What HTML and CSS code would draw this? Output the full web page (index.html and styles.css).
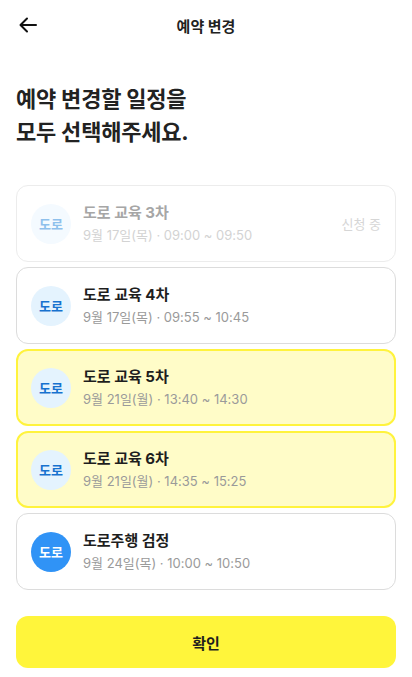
FILE: index.html
```html
<!DOCTYPE html>
<html lang="ko">
<head>
    <meta charset="UTF-8">
    <title>예약 변경</title>
    <meta name="viewport" content="width=device-width, initial-scale=1">
    <link rel="stylesheet" href="styles.css">
</head>
<body>

    <header class="top-bar">
        <button class="back-btn" aria-label="뒤로">
            <svg width="18" height="16" viewBox="0 0 18 16" fill="none" stroke="#111" stroke-width="2" stroke-linecap="round" stroke-linejoin="round">
                <path d="M17 8H2"/>
                <path d="M8 1.5L1.5 8L8 14.5"/>
            </svg>
        </button>
        <h2 class="top-title">예약 변경</h2>
    </header>

    <h1 class="heading">예약 변경할 일정을<br>모두 선택해주세요.</h1>

    <div class="schedule-list">
        <div class="schedule disabled">
            <span class="badge">도로</span>
            <div class="info">
                <p class="name">도로 교육 3차</p>
                <p class="time">9월 17일(목) · 09:00 ~ 09:50</p>
            </div>
            <span class="status">신청 중</span>
        </div>
        <div class="schedule">
            <span class="badge">도로</span>
            <div class="info">
                <p class="name">도로 교육 4차</p>
                <p class="time">9월 17일(목) · 09:55 ~ 10:45</p>
            </div>
        </div>
        <div class="schedule selected">
            <span class="badge">도로</span>
            <div class="info">
                <p class="name">도로 교육 5차</p>
                <p class="time">9월 21일(월) · 13:40 ~ 14:30</p>
            </div>
        </div>
        <div class="schedule selected">
            <span class="badge">도로</span>
            <div class="info">
                <p class="name">도로 교육 6차</p>
                <p class="time">9월 21일(월) · 14:35 ~ 15:25</p>
            </div>
        </div>
        <div class="schedule">
            <span class="badge exam">도로</span>
            <div class="info">
                <p class="name">도로주행 검정</p>
                <p class="time">9월 24일(목) · 10:00 ~ 10:50</p>
            </div>
        </div>
    </div>

    <button class="confirm-btn">확인</button>

</body>
</html>
```

FILE: styles.css
```css
body {
    font-family: Inter, "Noto Sans CJK KR", sans-serif;
    background-color: #ffffff;
    color: #1a1a1a;
    margin: 0;
    padding: 0 16px;
    box-sizing: border-box;
}

.top-bar {
    position: relative;
    height: 50px;
    display: flex;
    align-items: center;
    justify-content: center;
}

.back-btn {
    position: absolute;
    left: 3px;
    top: 17px;
    padding: 0;
    border: none;
    background: none;
    display: flex;
}

.top-title {
    margin: 0;
    font-size: 15px;
    font-weight: 700;
    color: #222;
}

.heading {
    margin: 33px 0 36px;
    font-size: 22px;
    line-height: 33px;
    font-weight: 700;
    color: #222;
    letter-spacing: -0.2px;
}

.schedule-list {
    display: flex;
    flex-direction: column;
    gap: 5px;
}

.schedule {
    height: 77px;
    display: flex;
    align-items: center;
    gap: 12px;
    padding: 0 14px;
    border: 1px solid #dcdcdc;
    border-radius: 12px;
    box-sizing: border-box;
}

.schedule.selected {
    background-color: #fffcc8;
    border: 2px solid #fff33d;
    padding: 0 13px;
}

.schedule.disabled {
    border-color: #ececec;
}

.badge {
    width: 40px;
    height: 40px;
    flex-shrink: 0;
    border-radius: 50%;
    background-color: #e4f3fe;
    color: #1772cf;
    font-size: 13px;
    font-weight: 700;
    display: flex;
    align-items: center;
    justify-content: center;
}

.badge.exam {
    background-color: #3093f6;
    color: #ffffff;
}

.info {
    flex: 1;
}

.info p {
    margin: 0;
}

.name {
    font-size: 15px;
    font-weight: 700;
    color: #1e1e1e;
    line-height: 20px;
}

.time {
    margin-top: 3px !important;
    font-size: 13px;
    color: #9a9a9a;
    line-height: 18px;
}

.disabled .badge {
    background-color: #f4faff;
    color: #8ec0ec;
}

.disabled .name {
    color: #a6a6a6;
}

.disabled .time {
    color: #d3d3d3;
}

.status {
    font-size: 13px;
    color: #d6d6d6;
}

.confirm-btn {
    display: block;
    width: 100%;
    height: 52px;
    margin-top: 26px;
    border: none;
    border-radius: 12px;
    background-color: #fff53b;
    font-family: inherit;
    font-size: 15px;
    font-weight: 700;
    color: #1e1e1e;
}
```
